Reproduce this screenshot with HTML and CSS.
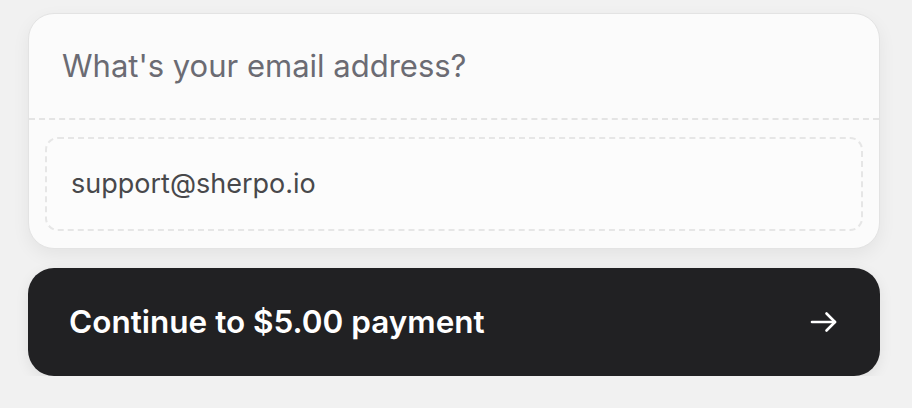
FILE: index.html
```html
<!DOCTYPE html>
<html lang="en">
<head>
<meta charset="utf-8">
<title>Email</title>
<link rel="stylesheet" href="styles.css">
</head>
<body>
<main class="page">
  <section class="card">
    <div class="card-header">
      <h2 class="question">What's your email address?</h2>
    </div>
    <div class="card-body">
      <div class="field">
        <span class="field-value">support@sherpo.io</span>
      </div>
    </div>
  </section>
  <button class="cta" type="button">
    <span class="cta-label">Continue to $5.00 payment</span>
    <svg class="cta-icon" width="28" height="22" viewBox="0 0 28 22" fill="none" stroke="#fff" stroke-width="2.6" stroke-linecap="round" stroke-linejoin="round">
      <path d="M2 11H25"/>
      <path d="M16.5 2.5L25 11L16.5 19.5"/>
    </svg>
  </button>
</main>
</body>
</html>
```
FILE: styles.css
```css
* { box-sizing: border-box; }
html, body {
  margin: 0;
  background: #f1f1f1;
  font-family: Inter, "Noto Sans", sans-serif;
}
.page {
  padding: 13px 32px 0 28px;
  display: flex;
  flex-direction: column;
  gap: 19px;
}
.card {
  background: #fbfbfb;
  border: 1px solid #e3e3e3;
  border-radius: 26px;
  box-shadow: 0 6px 18px rgba(0, 0, 0, 0.06);
  overflow: hidden;
}
.card-header {
  height: 106px;
  display: flex;
  align-items: center;
  padding: 0 33px;
  border-bottom: 2px dashed #e4e4e4;
}
.question {
  margin: 0;
  font-size: 31px;
  line-height: 36px;
  font-weight: 400;
  color: #6b6b73;
  letter-spacing: 0;
}
.card-body {
  padding: 17px 16px 17px;
}
.field {
  height: 94px;
  border: 2px dashed #e6e6e6;
  border-radius: 13px;
  display: flex;
  align-items: center;
  padding: 0 24px;
  background: #fcfcfc;
}
.field-value {
  font-size: 27px;
  line-height: 32px;
  color: #48484b;
}
.cta {
  height: 108px;
  border: none;
  border-radius: 26px;
  background: #212123;
  color: #fff;
  display: flex;
  align-items: center;
  justify-content: space-between;
  padding: 0 42px 0 41px;
  font-family: inherit;
  box-shadow: 0 4px 14px rgba(0, 0, 0, 0.08);
}
.cta-label {
  font-size: 31.5px;
  line-height: 38px;
  font-weight: 600;
}
.cta-icon { display: block; }
```
